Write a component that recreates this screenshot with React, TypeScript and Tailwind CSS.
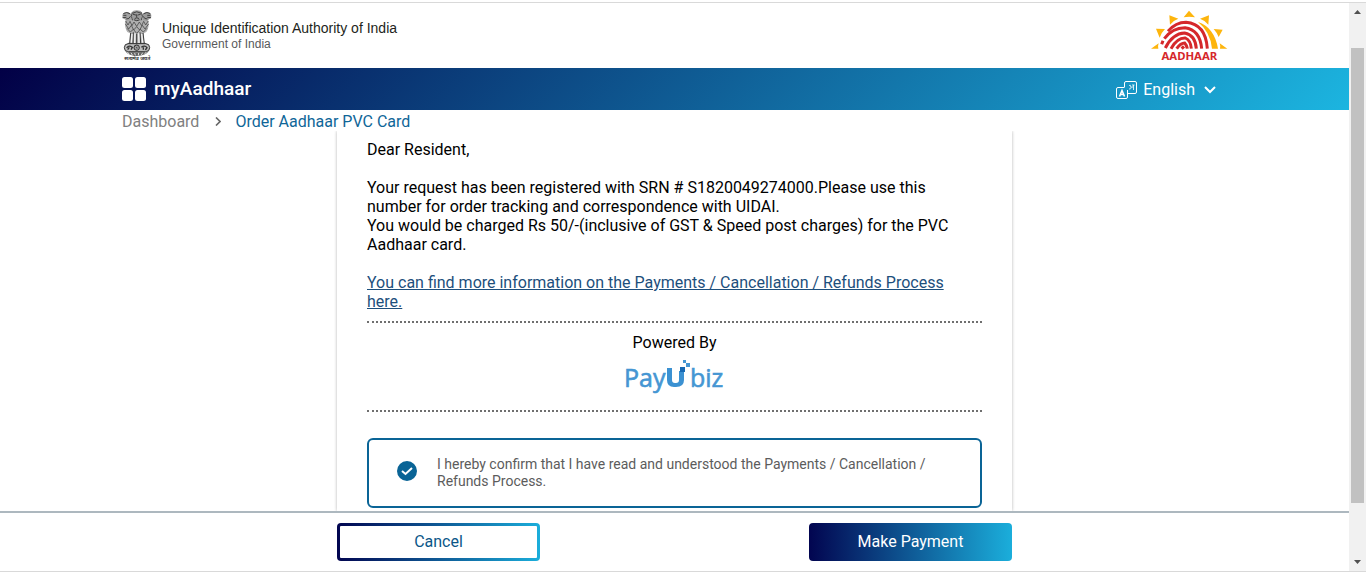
import React, { useState } from 'react';

const sans = "font-['Roboto','Noto_Sans',sans-serif]";

function Emblem() {
  return (
    <svg className="h-[51px] w-[30px]" viewBox="0 0 90 153" role="img" aria-label="State Emblem of India">
      {/* bodies and manes */}
      <path d="M9 32Q7 52 16 66L24 70L22 104H66L65 70L73 66Q82 52 80 32Q62 22 44 24Q26 22 9 32Z" fill="#b0b0b0" />
      {/* heads */}
      <path d="M30 8Q32 1 44 1Q57 1 59 8Q62 22 55 30Q44 36 33 30Q27 20 30 8Z" fill="#9c9c9c" />
      <path d="M2 12Q10 3 20 7L29 14L27 31L14 33Q8 27 2 24Q0 17 2 12Z" fill="#a4a4a4" />
      <path d="M87 12Q79 3 69 7L60 14L62 31L75 33Q81 27 87 24Q89 17 87 12Z" fill="#9a9a9a" />
      <g fill="none" stroke="#333" strokeWidth="2.6" strokeLinecap="round">
        <path d="M33 9Q44 1 56 9M34 13L41 15M48 15L55 13M44 14V21M39 25Q44 21 50 25M37 30Q44 35 52 30" />
        <path d="M5 10Q14 4 24 11M5 16L12 16M3 23L12 22M14 27Q22 28 25 20" />
        <path d="M84 10Q75 4 65 11M84 16L77 16M86 23L77 22M75 27Q67 28 64 20" />
        <path d="M30 8Q25 20 31 30M59 8Q64 20 58 30" />
      </g>
      <g fill="none" stroke="#484848" strokeWidth="2.4" strokeLinecap="round">
        <path d="M12 34L18 45L24 34L30 47L36 36L44 49L52 36L59 47L65 34L71 45L78 34" />
        <path d="M11 43L20 57L28 46L35 60L44 50L53 60L61 46L69 57L79 43" />
        <path d="M16 56L25 66L34 58L44 70L55 58L64 66L74 56" />
      </g>
      {/* legs */}
      <path d="M26 69L23 101M34 67L33 101M44 72V101M54 67L56 101M63 69L67 101" stroke="#3a3a3a" strokeWidth="3" fill="none" />
      <path d="M30 72L28 98M39 70L38 99M50 70L51 99M59 72L62 98" stroke="#f4f4f4" strokeWidth="4" fill="none" />
      <path d="M20 98Q44 104 69 98L74 103H15Z" fill="#3d3d3d" />
      {/* abacus and bell base */}
      <rect x="7" y="101" width="76" height="24" rx="12" fill="#bdbdbd" stroke="#333" strokeWidth="3" />
      <circle cx="44" cy="113" r="8" fill="#ddd" stroke="#222" strokeWidth="3" />
      <path d="M36 113H52M44 105V121M38 107L50 119M38 119L50 107" stroke="#444" strokeWidth="1.5" />
      <path d="M14 114Q20 104 31 112L27 119M58 112Q68 104 75 113L70 120M17 119L22 112M64 119V112" stroke="#333" strokeWidth="4" fill="none" />
      <path d="M10 123Q44 131 80 123Q73 137 44 138Q17 137 10 123Z" fill="#646464" />
      <path d="M16 126L22 133M27 128L31 135M38 129L40 136M50 129L49 136M62 128L58 135M73 126L67 133" stroke="#ddd" strokeWidth="3" />
      <text x="46" y="151" textAnchor="middle" fontSize="15" fontWeight="700" fill="#333" fontFamily="Noto Sans, sans-serif">सत्यमेव जयते</text>
    </svg>
  );
}

function AadhaarLogo() {
  return (
    <svg className="h-[51px] w-[77px] overflow-visible" viewBox="155 31 231 153" role="img" aria-label="Aadhaar">
      <g fill="#fdb50d">
        <path d="M269 33L287 53Q269 49 253 53Z" />
        <path d="M210 47L237 57Q222 62 212 75Z" />
        <path d="M329 47L302 57Q317 62 327 75Z" />
        <path d="M170 87L197 88Q186 99 181 114Z" />
        <path d="M370 90L343 88Q353 99 358 112Z" />
        <path d="M155 147L178 131Q175 139 177 147Z" />
        <path d="M384 147L361 131Q364 139 362 147Z" />
        <path d="M296 67Q345 83 356 147H338Q333 96 296 67Z" />
      </g>
      <g fill="none" stroke="#d5282b" strokeWidth="9">
        <path d="M206 95Q229 68 260 68Q319 73 324 147" />
        <path d="M187 134L191 123M195 117Q219 84 257 84Q302 90 307 147" />
        <path d="M198 145Q220 101 256 100Q288 106 291 147" />
        <path d="M215 147Q233 114 258 115Q274 122 276 147" />
        <path d="M232 147Q244 130 256 130Q263 138 264 147" />
        <path d="M247 147L254 140" />
      </g>
      <text x="270" y="180" textAnchor="middle" fontSize="34" fontWeight="700" fill="#d5282b" fontFamily="Noto Sans, sans-serif">AADHAAR</text>
    </svg>
  );
}

function PayUBizLogo() {
  return (
    <svg className="h-[36px] w-[100px]" viewBox="0 0 100 36" role="img" aria-label="PayUbiz">
      <g fill="#4596d3" stroke="#4596d3" strokeWidth="0.6" fontFamily="Open Sans, sans-serif">
        <text x="-1" y="27" fontSize="25">Pay</text>
        <text x="65" y="27" fontSize="25">biz</text>
      </g>
      <path d="M42 8H47V20Q47 23 50 23H51Q54 23 54 20V11H59V20Q59 27 51 27H49Q42 27 42 20Z" fill="#3b91d2" />
      <path d="M55 7H60V12H55Z" fill="#1769b4" />
      <path d="M61 3H65V7H61ZM58 0H61V3H58Z" fill="#4596d3" />
    </svg>
  );
}

function TranslateIcon() {
  return (
    <svg className="h-[19px] w-[22px]" viewBox="0 0 22 19" fill="none" stroke="white" aria-hidden="true">
      <path d="M8.5 6.5V2Q8.5 .5 10 .5H19Q20.5 .5 20.5 2V11Q20.5 12.5 19 12.5H12" />
      <path d="M8 6.5H2Q.5 6.5 .5 8V16Q.5 17.5 2 17.5H10Q11.5 17.5 11.5 16V9" />
      <path d="M3.5 15.5L6 9.5L8.5 15.5M4.5 13.5H7.5" strokeWidth="1.6" />
      <path d="M13 4.5Q15 3.5 14.5 5.5Q16 8 13 8M15 6H17M17.5 4V9M16 4H18.5" strokeWidth="0.8" />
    </svg>
  );
}

function Header() {
  return (
    <header>
      <div className="mx-auto flex h-[65px] w-full max-w-[1107px] items-center justify-between pl-px">
        <div className="flex items-center gap-[10px]">
          <Emblem />
          <div className="font-['Liberation_Sans',sans-serif]">
            <p className="text-[14px] leading-4 text-[#231f20]">Unique Identification Authority of India</p>
            <p className="text-[12px] leading-4 text-[#58595b]">Government of India</p>
          </div>
        </div>
        <AadhaarLogo />
      </div>
      <div className="bg-[linear-gradient(135deg,#020046_0%,#1cb5e0_100%)] text-white">
        <div className="mx-auto flex h-[42px] w-full max-w-[1107px] items-center justify-between pl-px">
          <a href="#home" className="flex items-center gap-2 text-[19px] font-medium">
            <svg className="size-6" viewBox="0 0 24 24" fill="white" aria-hidden="true">
              <rect width="11" height="11" rx="2.5" />
              <rect x="13" width="11" height="11" rx="2.5" />
              <rect y="13" width="11" height="11" rx="2.5" />
              <rect x="13" y="13" width="11" height="11" rx="2.5" />
            </svg>
            myAadhaar
          </a>
          <button type="button" className="mr-3 flex items-center gap-[5px] pt-[2px] text-base">
            <TranslateIcon />
            English
            <svg className="ml-1 h-2 w-3" viewBox="0 0 12 8" fill="none" stroke="white" strokeWidth="2" aria-hidden="true">
              <path d="M1 1L6 6L11 1" />
            </svg>
          </button>
        </div>
      </div>
    </header>
  );
}

function Breadcrumb() {
  return (
    <nav aria-label="Breadcrumb" className="mx-auto flex w-full max-w-[1107px] items-center pt-[2px] pl-px text-base leading-[19px]">
      <a href="#dashboard" className="text-[#808080]">Dashboard</a>
      <svg className="mr-[14px] ml-4 h-[9px] w-[6px]" viewBox="0 0 6 9" fill="none" stroke="#666" strokeWidth="1.6" aria-hidden="true">
        <path d="M1 .5L5 4.5L1 8.5" />
      </svg>
      <a href="#order" className="text-[#0f6698]">Order Aadhaar PVC Card</a>
    </nav>
  );
}

function Scrollbar() {
  return (
    <div aria-hidden="true" className="flex w-[17px] shrink-0 flex-col items-center bg-[#f1f1f1] pt-[7px] pb-[7px]">
      <svg className="h-1 w-[7px]" viewBox="0 0 7 4" fill="#505050"><path d="M0 4L3.5 0L7 4Z" /></svg>
      <div className="mt-[34px] mb-[57px] w-[13px] flex-1 bg-[#c1c1c1]" />
      <svg className="h-1 w-[7px]" viewBox="0 0 7 4" fill="#505050"><path d="M0 0L3.5 4L7 0Z" /></svg>
    </div>
  );
}

export default function App() {
  const [confirmed, setConfirmed] = useState(true);

  return (
    <div className={`flex h-screen flex-col bg-white pt-[2px] pb-1 text-black ${sans}`}>
      <div className="flex min-h-0 flex-1 border-y border-[#d9d9d9]">
        <div className="flex min-w-0 flex-1 flex-col">
          <Header />
          <Breadcrumb />
          <main className="min-h-0 flex-1 overflow-hidden">
            <section className="mx-auto min-h-full w-[675px] max-w-full px-[30px] pt-[9px] text-base leading-[19px] shadow-[0_0_3px_rgba(0,0,0,0.3)]">
              <p>Dear Resident,</p>
              <p className="mt-[19px]">
                Your request has been registered with SRN # S1820049274000.Please use this number for order tracking and
                correspondence with UIDAI.
              </p>
              <p>You would be charged Rs 50/-(inclusive of GST &amp; Speed post charges) for the PVC Aadhaar card.</p>
              <p className="mt-[19px] pr-4">
                <a href="#refunds" className="text-[#1d4f7c] underline">
                  You can find more information on the Payments / Cancellation / Refunds Process here.
                </a>
              </p>
              <div className="mt-[10px] flex h-[91px] flex-col items-center border-y-2 border-dotted border-[#6f6f6f] pt-[10px]">
                <p>Powered By</p>
                <div className="mt-2">
                  <PayUBizLogo />
                </div>
              </div>
              <label className="mt-[26px] flex h-[70px] items-start gap-5 rounded-[6px] border-2 border-[#0a6496] px-7 pt-4 text-sm leading-[17px] text-[#5c5c5c]">
                <span className="mt-[5px] grid size-5 shrink-0 place-items-center">
                  <input
                    type="checkbox"
                    checked={confirmed}
                    onChange={(e) => setConfirmed(e.target.checked)}
                    className="peer col-start-1 row-start-1 size-5 appearance-none rounded-full border-2 border-[#0a6496] checked:bg-[#0a6496]"
                  />
                  <svg
                    className="pointer-events-none col-start-1 row-start-1 hidden size-3 peer-checked:block"
                    viewBox="0 0 12 12"
                    fill="none"
                    stroke="white"
                    strokeWidth="2"
                    aria-hidden="true"
                  >
                    <path d="M1 6L4.5 9L11 3" />
                  </svg>
                </span>
                I hereby confirm that I have read and understood the Payments / Cancellation / Refunds Process.
              </label>
            </section>
          </main>
          <footer className="border-t-2 border-[#adb8bf] bg-white py-[10px]">
            <div className="mx-auto flex w-[675px] max-w-full justify-between">
              <button
                type="button"
                className="h-[38px] w-[203px] rounded bg-[linear-gradient(90deg,#020550,#1baedb)] p-[3px] text-base text-[#0b5788]"
              >
                <span className="flex h-full items-center justify-center rounded-[1px] bg-white">Cancel</span>
              </button>
              <button
                type="button"
                disabled={!confirmed}
                className="h-[38px] w-[203px] rounded bg-[linear-gradient(90deg,#020550,#1baedb)] text-base text-white"
              >
                Make Payment
              </button>
            </div>
          </footer>
        </div>
        <Scrollbar />
      </div>
    </div>
  );
}
